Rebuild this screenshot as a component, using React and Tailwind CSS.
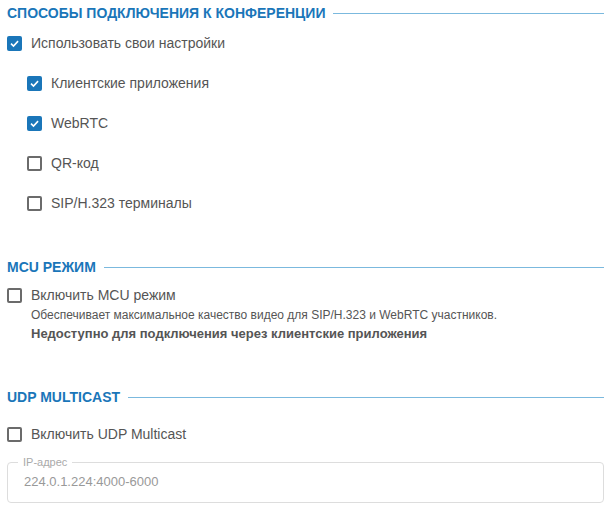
import React, { useState } from "react";

const Check = ({ checked }) => (
  <span
    className={
      "flex h-[15px] w-[15px] shrink-0 items-center justify-center rounded-[2px] " +
      (checked ? "bg-[#1a76b9]" : "border-2 border-[#6b6b6b] bg-white")
    }
  >
    {checked && (
      <svg width="11" height="11" viewBox="0 0 12 12" fill="none">
        <path d="M2.2 6.2 L4.9 8.8 L9.9 3.4" stroke="white" strokeWidth="1.7" />
      </svg>
    )}
  </span>
);

const CheckRow = ({ label, checked, onToggle, className = "" }) => (
  <label
    className={"flex cursor-pointer items-center gap-[9px] " + className}
    onClick={onToggle}
  >
    <Check checked={checked} />
    <span className="text-[14px] leading-[16px] text-[#555]">{label}</span>
  </label>
);

const Header = ({ title }) => (
  <div className="flex items-center gap-2">
    <span className="whitespace-nowrap text-[14px] font-bold leading-[16px] text-[#1a76b9]">
      {title}
    </span>
    <span className="h-px flex-1 bg-[#7bb9de]"></span>
  </div>
);

export default function App() {
  const [state, setState] = useState({
    own: true,
    clients: true,
    webrtc: true,
    qr: false,
    sip: false,
    mcu: false,
    udp: false,
  });
  const toggle = (k) => (e) => {
    e.preventDefault();
    setState({ ...state, [k]: !state[k] });
  };

  return (
    <div
      className="w-[611px] bg-white pl-[7px] pr-[7px]"
      style={{ fontFamily: "'Liberation Sans', Arial, sans-serif" }}
    >
      <div className="pt-[5px]">
        <Header title="СПОСОБЫ ПОДКЛЮЧЕНИЯ К КОНФЕРЕНЦИИ" />
      </div>
      <CheckRow
        className="mt-[14px]"
        label="Использовать свои настройки"
        checked={state.own}
        onToggle={toggle("own")}
      />
      <div className="flex flex-col gap-[24px] pl-[20px] pt-[24px]">
        <CheckRow label="Клиентские приложения" checked={state.clients} onToggle={toggle("clients")} />
        <CheckRow label="WebRTC" checked={state.webrtc} onToggle={toggle("webrtc")} />
        <CheckRow label="QR-код" checked={state.qr} onToggle={toggle("qr")} />
        <CheckRow label="SIP/H.323 терминалы" checked={state.sip} onToggle={toggle("sip")} />
      </div>

      <div className="mt-[48px]">
        <Header title="MCU РЕЖИМ" />
      </div>
      <CheckRow
        className="mt-[12px]"
        label="Включить MCU режим"
        checked={state.mcu}
        onToggle={toggle("mcu")}
      />
      <div className="pl-[24px] pt-[5px]">
        <div className="text-[12px] leading-[14px] text-[#555]">
          Обеспечивает максимальное качество видео для SIP/H.323 и WebRTC участников.
        </div>
        <div className="mt-[4px] text-[13px] font-bold leading-[16px] text-[#555]">
          Недоступно для подключения через клиентские приложения
        </div>
      </div>

      <div className="mt-[47px]">
        <Header title="UDP MULTICAST" />
      </div>
      <CheckRow
        className="mt-[21px]"
        label="Включить UDP Multicast"
        checked={state.udp}
        onToggle={toggle("udp")}
      />
      <fieldset className="mt-[14px] h-[47px] rounded-[4px] border border-[#dddddd] px-[10px]">
        <legend className="px-[5px] text-[11px] leading-[12px] text-[#aaa]">IP-адрес</legend>
        <div className="pl-[6px] pt-[6px] text-[13px] leading-[16px] text-[#999]">
          224.0.1.224:4000-6000
        </div>
      </fieldset>
    </div>
  );
}
